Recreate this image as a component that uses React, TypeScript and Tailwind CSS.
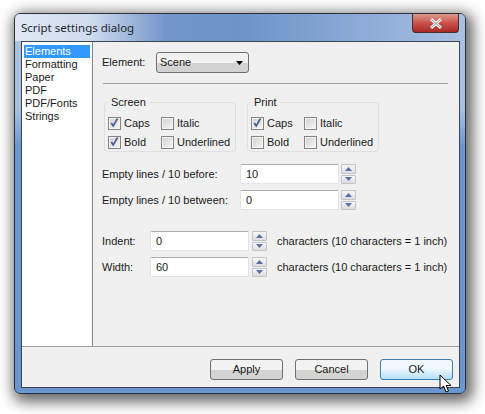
import React from 'react';

const Check = ({ label, checked }: { label: string; checked?: boolean }) => (
  <div className="flex items-center h-[19px]">
    <div className="w-[13px] h-[13px] border border-[#858585] bg-gradient-to-br from-[#d0d0d0] to-[#f7f7f7] shadow-[inset_0_0_0_1px_#f4f4f4] flex items-center justify-center shrink-0">
      {checked && (
        <svg width="11" height="11" viewBox="0 0 11 11">
          <path d="M1.5 5.5 L4.3 9.5 L9.5 0.5 L7.4 0.5 L4.3 6.2 L3 4.5 Z" fill="#4a5f97" />
        </svg>
      )}
    </div>
    <span className="ml-[3px]">{label}</span>
  </div>
);

const Group = ({ title, caps, bold }: { title: string; caps: boolean; bold: boolean }) => (
  <fieldset className="w-[132px] h-[56px] border border-[#dde1e6] rounded-[3px] pl-[3px] -mt-[6px]">
    <legend className="px-[3px] leading-[13px]">{title}</legend>
    <div className="grid grid-cols-[53px_1fr] mt-[5px]">
      <Check label="Caps" checked={caps} />
      <Check label="Italic" />
      <Check label="Bold" checked={bold} />
      <Check label="Underlined" />
    </div>
  </fieldset>
);

const Spinner = () => (
  <div className="w-[15px] h-[20px] flex flex-col gap-[1px] shrink-0">
    {[0, 1].map((i) => (
      <div key={i} className="h-[9.5px] flex-1 border border-[#c2c4c8] rounded-[1px] bg-gradient-to-b from-[#f6f6f6] to-[#dedede] flex items-center justify-center">
        <svg width="7" height="4" viewBox="0 0 7 4">
          <path d={i === 0 ? 'M0 4 L3.5 0 L7 4 Z' : 'M0 0 L3.5 4 L7 0 Z'} fill="#5a6ea8" />
        </svg>
      </div>
    ))}
  </div>
);

const Field = ({ value }: { value: string }) => (
  <div className="w-[99px] h-[20px] bg-white border border-[#e2e3ea] border-t-[#abadb3] rounded-[2px] pl-[5px] flex items-center shrink-0">
    {value}
  </div>
);

const Btn = ({ label, active }: { label: string; active?: boolean }) => (
  <div
    className={
      active
        ? 'w-[73px] h-[21px] rounded-[3px] border border-[#3c7fb1] bg-gradient-to-b from-[#eef8fe] from-45% to-[#b4dff8] flex items-center justify-center'
        : 'w-[73px] h-[21px] rounded-[3px] border border-[#707070] bg-gradient-to-b from-[#f2f2f2] from-50% to-[#d3d3d3] to-50% flex items-center justify-center'
    }
  >
    {label}
  </div>
);

const App = () => {
  const pages = ['Elements', 'Formatting', 'Paper', 'PDF', 'PDF/Fonts', 'Strings'];

  return (
    <div className="w-[485px] h-[414px] bg-white pt-[13px] pl-[14px] overflow-hidden relative font-['Liberation_Sans',sans-serif] text-[11px] text-[#1a1a1a]">
      {/* window frame */}
      <div className="w-[452px] h-[381px] rounded-[6px] border border-[#2b3038] bg-gradient-to-b from-[#a9c2e3] from-25% to-[#6a97d2] to-35% shadow-[3px_4px_14px_4px_rgba(0,0,0,0.6)] flex flex-col">
        {/* title bar */}
        <div className="h-[27px] flex justify-between shrink-0 rounded-t-[5px] bg-gradient-to-r from-[#7d9ccb] via-[#6d93c9] to-[#a8c0e2]">
          <div className="w-[150px] pl-[6px] pt-[5px] font-['Noto_Sans',sans-serif] text-[11.5px] leading-[18px] text-[#20262e] bg-gradient-to-r from-[#dfe7f3] via-[#cfdcee] to-transparent rounded-tl-[5px]">
            Script settings dialog
          </div>
          <div className="w-[47px] h-[19px] mr-[6px] rounded-b-[4px] border border-t-0 border-[#4a2b2b] bg-gradient-to-b from-[#dc9a90] via-[#c9514a] to-[#a62a22] flex items-center justify-center">
            <svg width="14" height="11" viewBox="0 0 14 11">
              <path d="M2 1 L12 10 M12 1 L2 10" stroke="#ffffff" strokeWidth="3" />
              <path d="M2 1 L12 10 M12 1 L2 10" stroke="#4a4a55" strokeWidth="0.6" />
            </svg>
          </div>
        </div>

        {/* client area */}
        <div className="w-[439px] h-[347px] ml-[6px] border border-[#3d4450] bg-[#f0f0f0] flex flex-col">
          <div className="h-[305px] flex shrink-0 border-b border-[#a0a0a0]">
            <div className="w-[71px] bg-white border-r border-[#828790] pt-[3px] pl-[2px] pr-[2px] shrink-0">
              {pages.map((p, i) => (
                <div key={p} className={i === 0 ? 'h-[13px] leading-[13px] pl-[1px] bg-[#3399ff] text-white' : 'h-[13px] leading-[13px] pl-[1px]'}>
                  {p}
                </div>
              ))}
            </div>

            <div className="flex-1 pl-[9px] pt-[10px]">
              <div className="flex items-center h-[21px]">
                <span className="w-[54px]">Element:</span>
                <div className="w-[93px] h-[21px] rounded-[3px] border border-[#707070] bg-gradient-to-b from-[#f2f2f2] from-50% to-[#d3d3d3] to-50% pl-[3px] pr-[5px] flex items-center justify-between">
                  Scene
                  <svg width="7" height="4" viewBox="0 0 7 4">
                    <path d="M0 0 L7 0 L3.5 4 Z" fill="#000" />
                  </svg>
                </div>
              </div>
              <div className="h-[1px] w-[345px] ml-[1px] mt-[10px] bg-[#a0a0a0]"></div>

              <div className="flex gap-[11px] mt-[18px] ml-[2px]">
                <Group title="Screen" caps bold />
                <Group title="Print" caps bold={false} />
              </div>

              <div className="flex items-center mt-[12px] h-[20px]">
                <span className="w-[138px]">Empty lines / 10 before:</span>
                <Field value="10" />
                <div className="ml-[2px]"><Spinner /></div>
              </div>
              <div className="flex items-center mt-[6px] h-[20px]">
                <span className="w-[138px]">Empty lines / 10 between:</span>
                <Field value="0" />
                <div className="ml-[2px]"><Spinner /></div>
              </div>

              <div className="flex items-center mt-[21px] h-[20px]">
                <span className="w-[48px]">Indent:</span>
                <Field value="0" />
                <div className="ml-[3px]"><Spinner /></div>
                <span className="ml-[10px] whitespace-nowrap">characters (10 characters = 1 inch)</span>
              </div>
              <div className="flex items-center mt-[6px] h-[20px]">
                <span className="w-[48px]">Width:</span>
                <Field value="60" />
                <div className="ml-[3px]"><Spinner /></div>
                <span className="ml-[10px] whitespace-nowrap">characters (10 characters = 1 inch)</span>
              </div>
            </div>
          </div>

          <div className="flex justify-end gap-[12px] pt-[12px] pr-[6px]">
            <Btn label="Apply" />
            <Btn label="Cancel" />
            <Btn label="OK" active />
          </div>
        </div>
      </div>

      {/* mouse pointer */}
      <svg className="absolute left-[439px] top-[374px]" width="14" height="20" viewBox="0 0 14 20">
        <path d="M1 1 L1 15 L4.5 12 L7 18 L9.5 17 L7.2 11.5 L12 11.5 Z" fill="#ffffff" stroke="#000000" strokeWidth="1" />
      </svg>
    </div>
  );
};

export default App;
